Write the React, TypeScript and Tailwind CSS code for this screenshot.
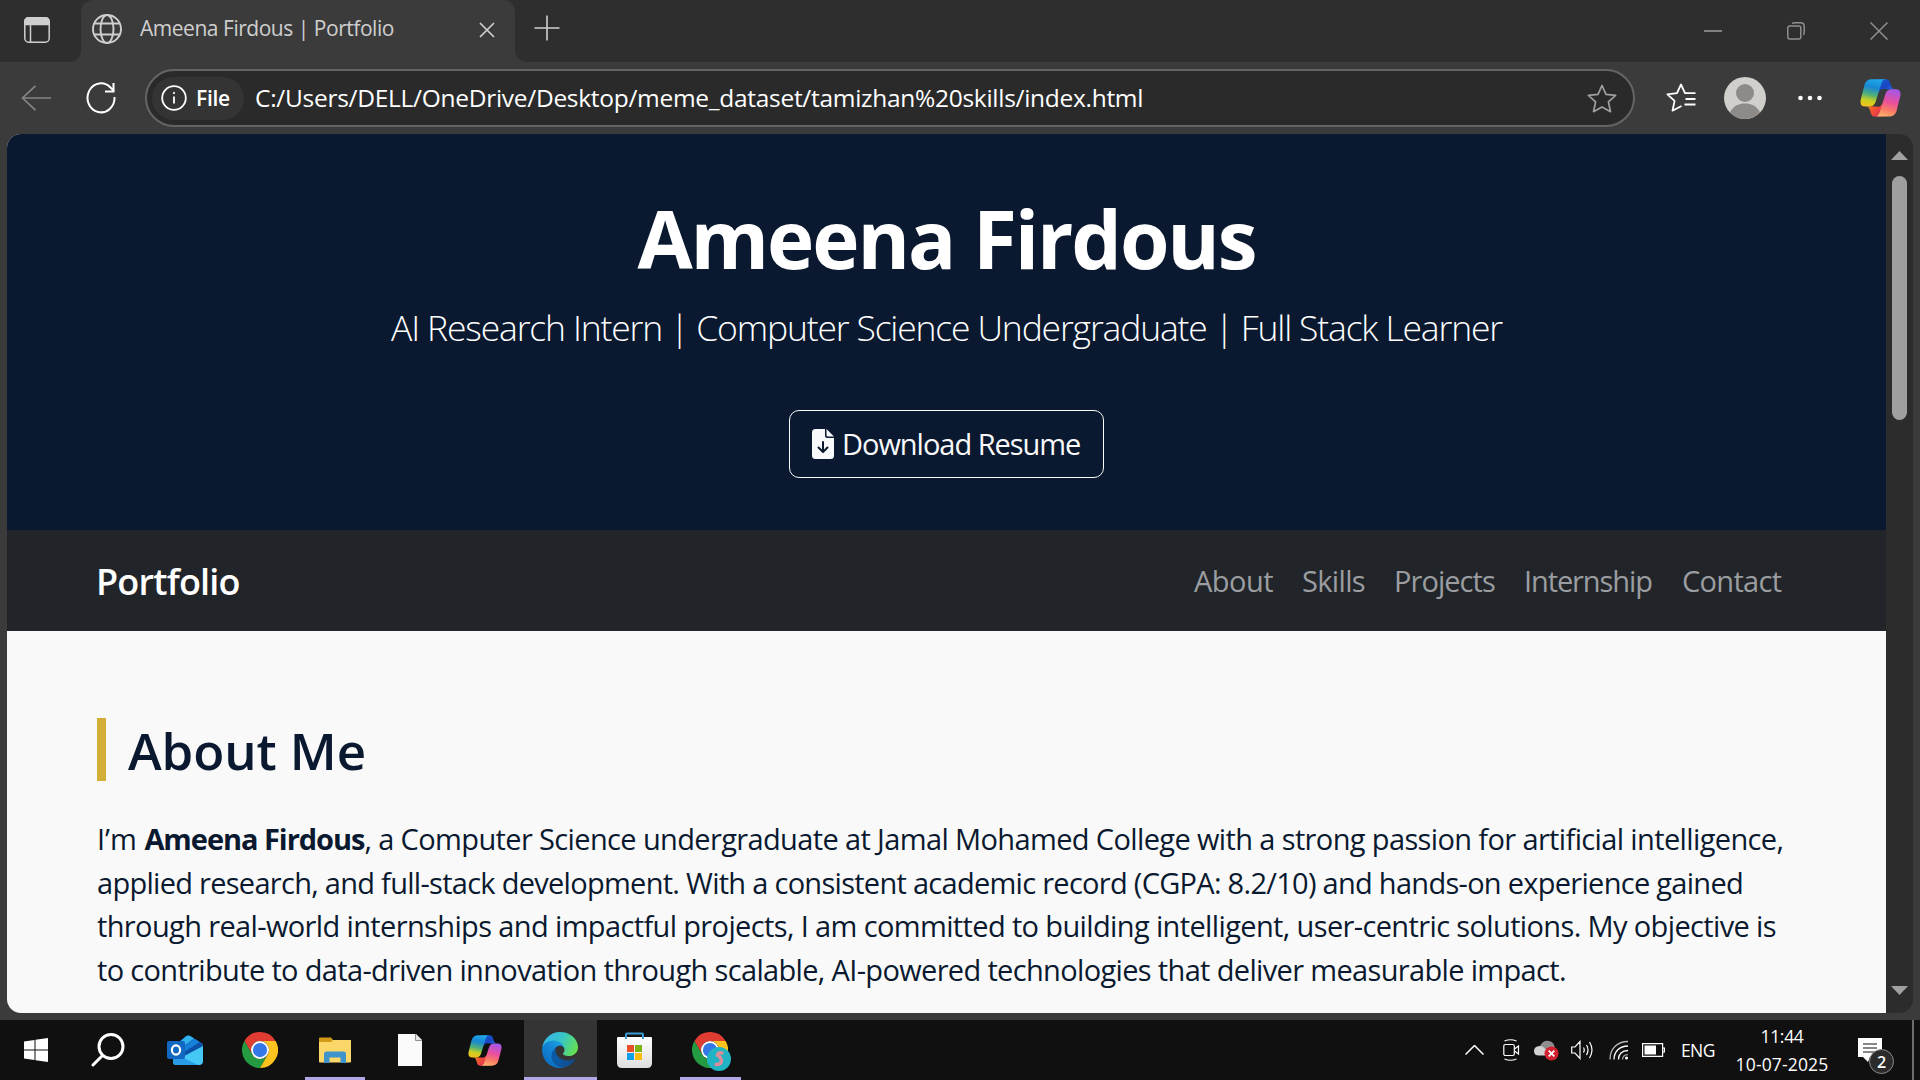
import type { ReactNode } from 'react';

function CopilotLogo({ id, className }: { id: string; className: string }) {
  return (
    <svg viewBox="0 0 41 38" className={className} preserveAspectRatio="none">
      <defs>
        <linearGradient id={`${id}l`} x1="0.6" y1="0" x2="0.4" y2="1">
          <stop offset="0" stopColor="#1fa8ea" />
          <stop offset="0.3" stopColor="#1787d4" />
          <stop offset="0.58" stopColor="#4fb07a" />
          <stop offset="0.8" stopColor="#c9d020" />
          <stop offset="1" stopColor="#f0c31d" />
        </linearGradient>
        <linearGradient id={`${id}r`} x1="0.65" y1="0" x2="0.4" y2="1">
          <stop offset="0" stopColor="#a557ea" />
          <stop offset="0.45" stopColor="#ea4f9c" />
          <stop offset="0.78" stopColor="#fb7f63" />
          <stop offset="1" stopColor="#fdb06c" />
        </linearGradient>
        <linearGradient id={`${id}t`} x1="0" y1="0" x2="1" y2="1">
          <stop offset="0" stopColor="#1560cf" />
          <stop offset="0.5" stopColor="#1a45c4" />
          <stop offset="1" stopColor="#2a7ff0" />
        </linearGradient>
        <linearGradient id={`${id}b`} x1="0" y1="0" x2="1" y2="0.6">
          <stop offset="0" stopColor="#f99a2e" />
          <stop offset="0.5" stopColor="#f2542d" />
          <stop offset="1" stopColor="#e0305c" />
        </linearGradient>
      </defs>
      <path fill={`url(#${id}t)`} d="M17 0.3h9c2.4 0 3.4 1.2 4.1 3.4l.9 3c.7 2.2 1.700 3.500 4 3.600h-8c-2.500 0-4-.6-5.500.2-1.500.8-2.500 2-3 3.500z" />
      <path fill={`url(#${id}b)`} d="M24 37.600h-9c-2.400 0-3.400-1.200-4.100-3.400l-.9-3c-.7-2.200-1.700-3.500-4-3.600h8c2.500 0 4 .6 5.500-.2 1.500-.8 2.500-2 3-3.500z" />
      <path fill={`url(#${id}l)`} d="M12.500.3h13.200c-2.600.2-3.700 1.900-4.500 4.600L16.200 21c-1.100 4-2.700 6.600-7 6.600H5.300C1.200 27.600-.2 25 .8 20.500L4.400 6.200C5.500 2.200 8.200.3 12.500.3z" />
      <path fill={`url(#${id}r)`} d="M28.500 37.600H15.300c2.600-.2 3.700-1.900 4.500-4.600L24.800 17c1.100-4 2.700-6.700 7-6.700h3.900c4.100 0 5.500 2.700 4.500 7.200l-3.600 14.200c-1.100 4-3.800 5.900-8.100 5.900z" />
    </svg>
  );
}

function ChromeLogo({ className }: { className: string }) {
  return (
    <svg viewBox="0 0 48 48" className={className}>
      <path fill="#e03c31" d="M24 12H44.800A24 24 0 0 0 3.220 12L13.600 30A12 12 0 0 1 24 12z" />
      <path fill="#249a41" d="M13.600 30L3.220 12A24 24 0 0 0 24 48L34.400 30A12 12 0 0 1 13.600 30z" />
      <path fill="#fcc31e" d="M34.400 30L24 48A24 24 0 0 0 44.800 12H24A12 12 0 0 1 34.400 30z" />
      <circle cx="24" cy="24" r="12" fill="#fff" />
      <circle cx="24" cy="24" r="9.500" fill="#3478e8" />
    </svg>
  );
}

function EdgeLogo({ className }: { className: string }) {
  return (
    <svg viewBox="0 0 256 256" className={className}>
      <defs>
        <linearGradient id="e1" x1="0.250" y1="0.600" x2="1" y2="0.600">
          <stop offset="0" stopColor="#0c59a4" />
          <stop offset="1" stopColor="#114a8b" />
        </linearGradient>
        <linearGradient id="e2" x1="0.800" y1="0.200" x2="0.200" y2="0.900">
          <stop offset="0" stopColor="#1b9de2" />
          <stop offset="0.500" stopColor="#1281d2" />
          <stop offset="1" stopColor="#0b6fc4" />
        </linearGradient>
        <linearGradient id="e3" x1="0" y1="0.300" x2="1" y2="0.600">
          <stop offset="0" stopColor="#35b5e6" />
          <stop offset="0.500" stopColor="#37c6c8" />
          <stop offset="1" stopColor="#66e050" />
        </linearGradient>
      </defs>
      <path fill="url(#e1)" transform="translate(-4.630 -4.920)" d="M235.680 195.460a93.730 93.730 0 0 1-10.540 4.710 101.870 101.870 0 0 1-35.900 6.460c-47.320 0-88.540-32.550-88.540-74.320A31.480 31.480 0 0 1 117.130 105c-42.800 1.800-53.800 46.400-53.800 72.530 0 73.880 68.090 81.370 82.760 81.370 7.910 0 19.840-2.300 27-4.560l1.310-.44a128.340 128.340 0 0 0 66.600-52.800 4 4 0 0 0-5.320-5.640z" />
      <path fill="url(#e2)" transform="translate(-4.630 -4.920)" d="M110.340 246.340A79.200 79.200 0 0 1 87.600 225a80.720 80.720 0 0 1 29.530-120c3.120-1.470 8.450-4.130 15.540-4a32.350 32.350 0 0 1 25.690 13 31.880 31.880 0 0 1 6.360 18.660c0-.21 24.460-79.600-80-79.600-43.900 0-80 41.660-80 78.210a130.150 130.150 0 0 0 12.110 56 128 128 0 0 0 156.380 67.110 75.550 75.550 0 0 1-62.780-8z" />
      <path fill="url(#e3)" transform="translate(-4.630 -4.920)" d="M156.940 153.780c-.81 1.050-3.300 2.500-3.300 5.660 0 2.610 1.700 5.120 4.720 7.230 14.380 10 41.490 8.680 41.560 8.680a59.560 59.560 0 0 0 30.270-8.350 61.380 61.380 0 0 0 30.430-52.880c.26-22.410-8-37.310-11.340-43.910C228.070 28.760 182.330 4.920 132.610 4.920a128 128 0 0 0-128 126.200c.48-36.540 36.800-66.050 80-66.050 3.500 0 23.460.34 42 10.070 16.340 8.580 24.900 18.940 30.850 29.210 6.180 10.670 7.280 24.150 7.280 29.520 0 5.370-2.740 13.330-7.800 19.910z" />
    </svg>
  );
}

function OutlookLogo() {
  return (
    <svg viewBox="0 0 36 30" className="h-[30px] w-9">
      <path fill="#1b6fc2" d="M7 11L19 1q2-1.200 4 0l13 8v13H7z" />
      <path fill="#2fb4ee" d="M9 10L19.500 1.200q2-1.200 4 0L27 3.500 11 15z" />
      <path fill="#1580d8" d="M14 14L28 4l5 3.200L17 19z" />
      <path fill="#0b4fa6" d="M17 17L33 7l3 3v3L19 22z" />
      <path fill="#45c8f5" d="M36 11v15q0 4-4 4H9q-3 0-3-3z" />
      <path fill="#2a9be6" d="M6 18l25 12H10q-4 0-4-4z" />
      <rect x="0" y="6" width="18" height="18" rx="2" fill="#1267c0" />
      <ellipse cx="9" cy="15" rx="4.100" ry="4.700" fill="none" stroke="#fff" strokeWidth="2.200" />
    </svg>
  );
}

function ExplorerLogo() {
  return (
    <svg viewBox="0 0 34 27" className="h-[27px] w-[34px]">
      <path fill="#d39a17" d="M1 1.500Q1 .5 2 .5h11l2 2.500h18v4H1z" />
      <path fill="#fbd668" d="M1 5h12l2-2h17q1 0 1 1v20.500q0 1-1 1H2q-1 0-1-1z" />
      <path fill="#3f94cc" d="M6 26V17q0-2.500 2.500-2.500h17Q28 14.500 28 17v9h-5.500v-5.500h-11V26z" />
    </svg>
  );
}

function StoreLogo() {
  return (
    <svg viewBox="0 0 35 36" className="h-9 w-[35px]">
      <defs>
        <linearGradient id="st" x1="0" y1="0" x2="0" y2="1">
          <stop offset="0" stopColor="#ffffff" />
          <stop offset="1" stopColor="#dedede" />
        </linearGradient>
      </defs>
      <path fill="url(#st)" d="M1 5h33q1 0 1 1v25q0 5-5 5H5q-5 0-5-5V6q0-1 1-1z" />
      <path d="M9 7V2.500q0-1 1-1h15q1 0 1 1V7" fill="none" stroke="#3a9bd0" strokeWidth="2" />
      <rect x="10" y="13" width="7" height="7" fill="#e8502c" />
      <rect x="18" y="13" width="7" height="7" fill="#7cb50f" />
      <rect x="10" y="21" width="7" height="7" fill="#0f9fe8" />
      <rect x="18" y="21" width="7" height="7" fill="#fbbb10" />
    </svg>
  );
}

function TaskButton({ w, children, active, line }: { w: string; children: ReactNode; active?: boolean; line?: string }) {
  return (
    <div className={`relative flex h-full shrink-0 items-center justify-center ${w} ${active ? 'bg-[#343434]' : ''}`}>
      {children}
      {line && <div className={`absolute bottom-0 h-[3px] bg-[#b1a6e6] ${line}`} />}
    </div>
  );
}

function TabStrip() {
  return (
    <div className="flex h-[62px] bg-[#3b3b3b] text-[#cfcfcf]">
      <div className="w-[81px] rounded-br-[12px] bg-[#2e2e2e] pt-[17px] pl-6">
        <svg viewBox="0 0 26 26" className="h-[26px] w-[26px]" fill="none" stroke="currentColor" strokeWidth="1.500">
          <rect x="0.800" y="0.800" width="24.400" height="24.400" rx="4" />
          <path d="M6.500 6v19" />
          <path d="M.8 7.500V5Q.8.800 5 .8h16q4.200 0 4.200 4.200v2.500z" fill="currentColor" />
        </svg>
      </div>
      <div className="w-[434px] bg-[#2e2e2e]">
        <div className="flex h-full rounded-t-[12px] bg-[#3b3b3b]">
          <svg viewBox="0 0 30 30" className="mt-3.5 ml-[11px] h-[30px] w-[30px] shrink-0" fill="none" stroke="currentColor" strokeWidth="1.900">
            <circle cx="15" cy="15" r="14" />
            <ellipse cx="15" cy="15" rx="6.500" ry="14" />
            <path d="M2.500 9.500h25M2.500 20.500h25" />
          </svg>
          <div className="mt-2 ml-[18px] w-[268px] text-[21px] leading-10 tracking-[-0.47px] whitespace-nowrap">Ameena Firdous | Portfolio</div>
          <svg viewBox="0 0 16 16" className="mt-[22px] ml-[71px] h-4 w-4 shrink-0" fill="none" stroke="currentColor" strokeWidth="1.700">
            <path d="M1 1l14 14M15 1L1 15" />
          </svg>
        </div>
      </div>
      <div className="flex flex-1 rounded-bl-[12px] bg-[#2e2e2e]">
        <svg viewBox="0 0 26 26" className="mt-[15px] ml-[19px] h-[26px] w-[26px]" fill="none" stroke="currentColor" strokeWidth="1.600">
          <path d="M13 .5v25M.5 13h25" />
        </svg>
        <div className="mt-[22px] mr-8 ml-auto flex gap-[65px] text-[#8f8f8f]">
          <svg viewBox="0 0 18 18" className="h-[18px] w-[18px]" fill="none" stroke="currentColor" strokeWidth="1.700">
            <path d="M0 9h18" />
          </svg>
          <svg viewBox="0 0 18 18" className="h-[18px] w-[18px]" fill="none" stroke="currentColor" strokeWidth="1.500">
            <rect x="0.800" y="4" width="13" height="13" rx="2" />
            <path d="M5 1.500Q6 .8 8 .8h5.500q3.700 0 3.700 3.700V10q0 2-.8 3" />
          </svg>
          <svg viewBox="0 0 18 18" className="h-[18px] w-[18px]" fill="none" stroke="currentColor" strokeWidth="1.500">
            <path d="M.5.5l17 17M17.500.5l-17 17" />
          </svg>
        </div>
      </div>
    </div>
  );
}

function Toolbar() {
  return (
    <div className="flex h-[72px] items-center bg-[#3b3b3b] text-white">
      <svg viewBox="0 0 30 26" className="ml-[21px] h-[26px] w-[30px] shrink-0" fill="none" stroke="#858585" strokeWidth="1.700">
        <path d="M14.500.8L1.500 13l13 12.200M1.500 13H30" />
      </svg>
      <svg viewBox="0 0 30 32" className="ml-[35px] h-8 w-[30px] shrink-0" fill="none" stroke="currentColor" strokeWidth="2">
        <path d="M28.500 15A13.500 14.500 0 1 1 24.500 5.500L28 9" />
        <path d="M27.500 1v8.500H19" />
      </svg>
      <div className="ml-[29px] flex h-[58px] w-[1490px] shrink-0 items-center rounded-full border-2 border-[#646464] bg-[#2a2a2a] pl-[5px]">
        <div className="flex h-[43px] w-[92px] items-center rounded-full bg-[#343434] pl-[9px]">
          <svg viewBox="0 0 26 26" className="h-[26px] w-[26px] shrink-0" fill="none" stroke="currentColor" strokeWidth="1.800">
            <circle cx="13" cy="13" r="11.800" />
            <path d="M13 11.500v7" />
            <circle cx="13" cy="8" r="0.700" fill="currentColor" strokeWidth="1" />
          </svg>
          <div className="ml-[9px] text-[21px] leading-8 font-semibold tracking-[-0.3px]">File</div>
        </div>
        <div className="ml-[11px] text-[24.500px] leading-9 tracking-[-0.29px] whitespace-nowrap">C:/Users/DELL/OneDrive/Desktop/meme_dataset/tamizhan%20skills/index.html</div>
        <svg viewBox="0 0 30 30" className="mt-px mr-4 ml-auto h-[30px] w-[30px]" fill="none" stroke="#a0a0a0" strokeWidth="1.700" strokeLinejoin="round">
          <path d="M15 1.500l4 8.900 9.600 1-7.200 6.500 2.100 9.800L15 23l-8.500 4.700 2.100-9.800-7.200-6.500 9.600-1z" />
        </svg>
      </div>
      <svg viewBox="0 0 30 30" className="ml-[31px] h-[30px] w-[30px] shrink-0" fill="none" stroke="currentColor" strokeWidth="1.800" strokeLinejoin="round">
        <path d="M29.500 10.200H19L15 1.500l-4 8.700-9.600 1.200 7.200 6.500-2.100 9.800L15.500 23M19.500 16h10M18.500 21.500h11" />
      </svg>
      <svg viewBox="0 0 42 42" className="ml-7 h-[42px] w-[42px] shrink-0">
        <circle cx="21" cy="21" r="21" fill="#d1cfcc" />
        <circle cx="21" cy="16" r="9" fill="#8d8a87" />
        <path fill="#8d8a87" d="M6 35.600C9 29 14.500 26.500 21 26.500S33 29 36 35.600A21 21 0 0 1 6 35.600z" />
      </svg>
      <svg viewBox="0 0 24 6" className="ml-8 h-1.5 w-6 shrink-0" fill="currentColor">
        <circle cx="2.500" cy="3" r="2.300" />
        <circle cx="12" cy="3" r="2.300" />
        <circle cx="21.500" cy="3" r="2.300" />
      </svg>
      <CopilotLogo id="ca" className="ml-[38px] h-[38px] w-[41px] shrink-0" />
    </div>
  );
}

const links = [
  { label: 'About', cls: 'ml-0 w-[79px] tracking-[-0.5px]' },
  { label: 'Skills', cls: 'ml-[29px] w-[63px] tracking-[-0.65px]' },
  { label: 'Projects', cls: 'ml-[29px] w-[101px] tracking-[-0.95px]' },
  { label: 'Internship', cls: 'ml-[29px] w-[128px] tracking-[-1.1px]' },
  { label: 'Contact', cls: 'ml-[30px] w-[100px] tracking-[-0.7px]' },
];

function Page() {
  return (
    <div className="flex w-[1879px] flex-col bg-[#f9f9f9] text-[#0a192f]">
      <header className="flex h-[396px] shrink-0 flex-col items-center bg-[#0a192f] pt-14 text-white">
        <h1 className="h-24 text-[80px] leading-[96px] font-bold tracking-[-2.07px]">Ameena Firdous</h1>
        <p className="mt-3.5 h-[54px] text-[35.500px] leading-[54px] font-light tracking-[-1.16px] whitespace-nowrap">
          AI Research Intern | Computer Science Undergraduate | Full Stack Learner
        </p>
        <div className="mt-14 flex h-[68px] w-[315px] items-center rounded-[10px] border border-[#f8f9fa] pl-[22px] text-[#f8f9fa]">
          <svg viewBox="0 0 22 30" className="h-[30px] w-[22px] shrink-0">
            <path fill="currentColor" d="M3.500 0H13v6.500Q13 9 15.500 9H22v17.500q0 3.500-3.500 3.500h-15Q0 30 0 26.500v-23Q0 0 3.500 0z" />
            <path fill="currentColor" d="M14.500 0L22 7.500h-6Q14.500 7.500 14.500 6z" />
            <path d="M11 13v9.500M6.500 18.500L11 23l4.500-4.500" fill="none" stroke="#0a192f" strokeWidth="2" strokeLinecap="round" strokeLinejoin="round" />
          </svg>
          <span className="ml-[8px] text-[29px] leading-10 tracking-[-1.03px] whitespace-nowrap">Download Resume</span>
        </div>
      </header>
      <nav className="flex h-[101px] shrink-0 items-center bg-[#212529] pl-[89px]">
        <div className="mt-0.5 w-[1098px] text-[36px] leading-[54px] font-semibold tracking-[-0.8px] text-white">Portfolio</div>
        {links.map((l) => (
          <div key={l.label} className={`shrink-0 text-[29px] leading-[43px] whitespace-nowrap text-[#9b9da0] ${l.cls}`}>{l.label}</div>
        ))}
      </nav>
      <main className="pt-[87px] pl-[90px]">
        <h2 className="flex h-[63px] items-center border-l-[9px] border-[#d4af37] pt-0.5 pl-[22px] text-[51px] leading-[63px] font-semibold tracking-[-0.1px]">About Me</h2>
        <div className="mt-9 text-[29px] leading-[43.5px] whitespace-nowrap">
          <div>
            <span>I’m </span>
            <strong className="font-bold tracking-[-1.04px]">Ameena Firdous</strong>
            <span className="tracking-[-0.63px]">, a Computer Science undergraduate at Jamal Mohamed College with a strong passion for artificial intelligence,</span>
          </div>
          <div className="tracking-[-0.717px]">applied research, and full-stack development. With a consistent academic record (CGPA: 8.2/10) and hands-on experience gained</div>
          <div className="tracking-[-0.633px]">through real-world internships and impactful projects, I am committed to building intelligent, user-centric solutions. My objective is</div>
          <div className="tracking-[-0.66px]">to contribute to data-driven innovation through scalable, AI-powered technologies that deliver measurable impact.</div>
        </div>
      </main>
    </div>
  );
}

function Scrollbar() {
  return (
    <div className="flex w-[27px] flex-col items-center bg-[#2c2c2c]">
      <svg viewBox="0 0 17 9" className="mt-[17px] h-[9px] w-[17px]" fill="#a0a0a0">
        <path d="M8.500 0L17 9H0z" />
      </svg>
      <div className="mt-4 h-[244px] w-[15px] rounded-full bg-[#9f9f9f]" />
      <svg viewBox="0 0 17 9" className="mt-auto mb-[18px] h-[9px] w-[17px]" fill="#a0a0a0">
        <path d="M8.500 9L17 0H0z" />
      </svg>
    </div>
  );
}

function Taskbar() {
  return (
    <div className="flex h-[60px] bg-[#101010] text-white">
      <TaskButton w="w-[72px]">
        <svg viewBox="0 0 24 24" className="h-6 w-6" fill="currentColor">
          <path d="M0 3.400L10.500 1.900V11.400H0zM11.500 1.700L24 0v11.400H11.500zM0 12.400h10.500v9.700L0 20.600zM11.500 12.400H24V24l-12.500-1.700z" />
        </svg>
      </TaskButton>
      <TaskButton w="w-[72px]">
        <svg viewBox="0 0 34 34" className="mr-px h-[34px] w-[34px]" fill="none" stroke="currentColor" strokeWidth="3" strokeLinecap="round">
          <circle cx="20" cy="13.500" r="12" />
          <path d="M11.500 22.500L2 32" />
        </svg>
      </TaskButton>
      <TaskButton w="w-[82px]"><OutlookLogo /></TaskButton>
      <TaskButton w="w-[68px]"><ChromeLogo className="h-9 w-9" /></TaskButton>
      <TaskButton w="w-[82px]" line="inset-x-[11px]"><ExplorerLogo /></TaskButton>
      <TaskButton w="w-[68px]">
        <svg viewBox="0 0 24 32" className="h-8 w-6">
          <path fill="#fafafa" d="M0 0h18l6 6v26H0z" />
          <path fill="#e6e6e6" stroke="#777" strokeWidth="0.800" d="M17.500 0v6.500H24" />
        </svg>
      </TaskButton>
      <TaskButton w="w-[80px]"><CopilotLogo id="cb" className="ml-0.5 h-[31px] w-[34px]" /></TaskButton>
      <TaskButton w="w-[73px]" active line="inset-x-0"><EdgeLogo className="mr-0.5 h-9 w-9" /></TaskButton>
      <TaskButton w="w-[75px]"><StoreLogo /></TaskButton>
      <TaskButton w="w-[77px]" line="inset-x-[8px]">
        <div className="relative mr-0.5">
          <ChromeLogo className="h-9 w-9" />
          <svg viewBox="0 0 24 24" className="absolute top-[15px] left-[15px] h-6 w-6">
            <circle cx="12" cy="12" r="12" fill="#1fb3c4" />
            <path d="M15 6q-3.500-.8-4.500 2 3 2 4 5 .3 4.500-5.500 4.500" fill="none" stroke="#d98f9b" strokeWidth="3.500" strokeLinecap="round" />
          </svg>
        </div>
      </TaskButton>
      <div className="ml-auto flex items-center">
        <svg viewBox="0 0 19 10" className="h-2.5 w-[19px]" fill="none" stroke="currentColor" strokeWidth="1.500">
          <path d="M.5 9.500l9-9 9 9" />
        </svg>
        <svg viewBox="0 0 17 22" className="ml-[19px] h-[22px] w-[17px]" fill="none" stroke="currentColor" strokeWidth="1.200">
          <rect x="0.800" y="5.500" width="10.500" height="11" rx="1.500" />
          <path d="M11.500 10l4-3v8l-4-3M1.500 2Q7.500-.5 13.500 2M1.500 20q6 2.500 12 0" />
        </svg>
        <svg viewBox="0 0 25 21" className="ml-[14px] h-[21px] w-[25px]">
          <path fill="#8e8e8e" d="M6 6q3-6 9-5 5 1 6 7l-3 5H8z" />
          <path fill="#d2d2d2" d="M5 15.500q-5 0-5-4.500T5.500 6q4 0 5.500 3l6 2.500v4z" />
          <circle cx="17.500" cy="13.500" r="7" fill="#d3222f" />
          <path d="M14.700 10.700l5.600 5.600M20.300 10.700l-5.600 5.600" stroke="#fff" strokeWidth="1.700" />
        </svg>
        <svg viewBox="0 0 23 20" className="ml-3 h-5 w-[23px]" fill="none" stroke="currentColor" strokeWidth="1.200">
          <path d="M.7 7H4l5-5.500v17L4 13H.7zM12.500 7.500q1.500 2.500 0 5M15.500 5q3 5 0 10M18.500 2q5 8 0 16" />
        </svg>
        <svg viewBox="0 0 20 20" className="ml-[15px] h-5 w-5" fill="none" stroke="currentColor" strokeWidth="1.300">
          <path d="M1 19.500C1 9 8 1.500 19 1.500" opacity="0.700" />
          <path d="M5 19.500C5 11.500 10.500 6 19 6M9.500 19.500c0-5.500 3.500-9 9.500-9" />
          <path d="M13.500 19.500c0-3 2-4.800 5.500-4.800" opacity="0.600" />
          <circle cx="17.500" cy="18" r="1.500" fill="currentColor" stroke="none" />
        </svg>
        <svg viewBox="0 0 23 14" className="ml-[13px] h-3.5 w-[23px]">
          <path fill="none" stroke="#fff" strokeWidth="1.200" d="M.6.6h20v12.800H.6zM21 5h1.400v4H21" />
          <rect x="2.500" y="2.500" width="11.500" height="9" fill="#fff" />
        </svg>
        <div className="ml-4 w-[34px] text-[17.500px] leading-6 tracking-[-0.6px]">ENG</div>
        <div className="ml-5 w-[94px] text-center text-[17.500px] leading-7 whitespace-nowrap">
          <div className="tracking-[-0.3px]">11:44</div>
          <div className="tracking-[0.15px]">10-07-2025</div>
        </div>
        <div className="relative ml-[29px] h-6 w-6">
          <svg viewBox="0 0 24 24" className="h-6 w-6">
            <path fill="#fff" d="M0 0h24v19H12l-2 5-5-5H0z" />
            <path d="M5 6h14M5 10h14M5 14h14" stroke="#101010" strokeWidth="1.200" />
          </svg>
          <div className="absolute top-[11px] left-[11px] flex h-[25px] w-[25px] items-center justify-center rounded-full border border-[#8a8a8a] bg-[#2b2b2b] text-[16px] leading-none font-semibold">2</div>
        </div>
        <div className="mr-1.5 ml-[30px] h-[60px] w-[2px] bg-[#6d6d6d]" />
      </div>
    </div>
  );
}

export default function App() {
  return (
    <div className="flex h-[1080px] w-[1920px] flex-col overflow-hidden bg-[#3b3b3b] font-['Open_Sans','Noto_Sans',sans-serif]">
      <TabStrip />
      <Toolbar />
      <div className="mx-[7px] flex h-[879px] w-[1906px] overflow-hidden rounded-[14px]">
        <Page />
        <Scrollbar />
      </div>
      <div className="h-[7px]" />
      <Taskbar />
    </div>
  );
}
